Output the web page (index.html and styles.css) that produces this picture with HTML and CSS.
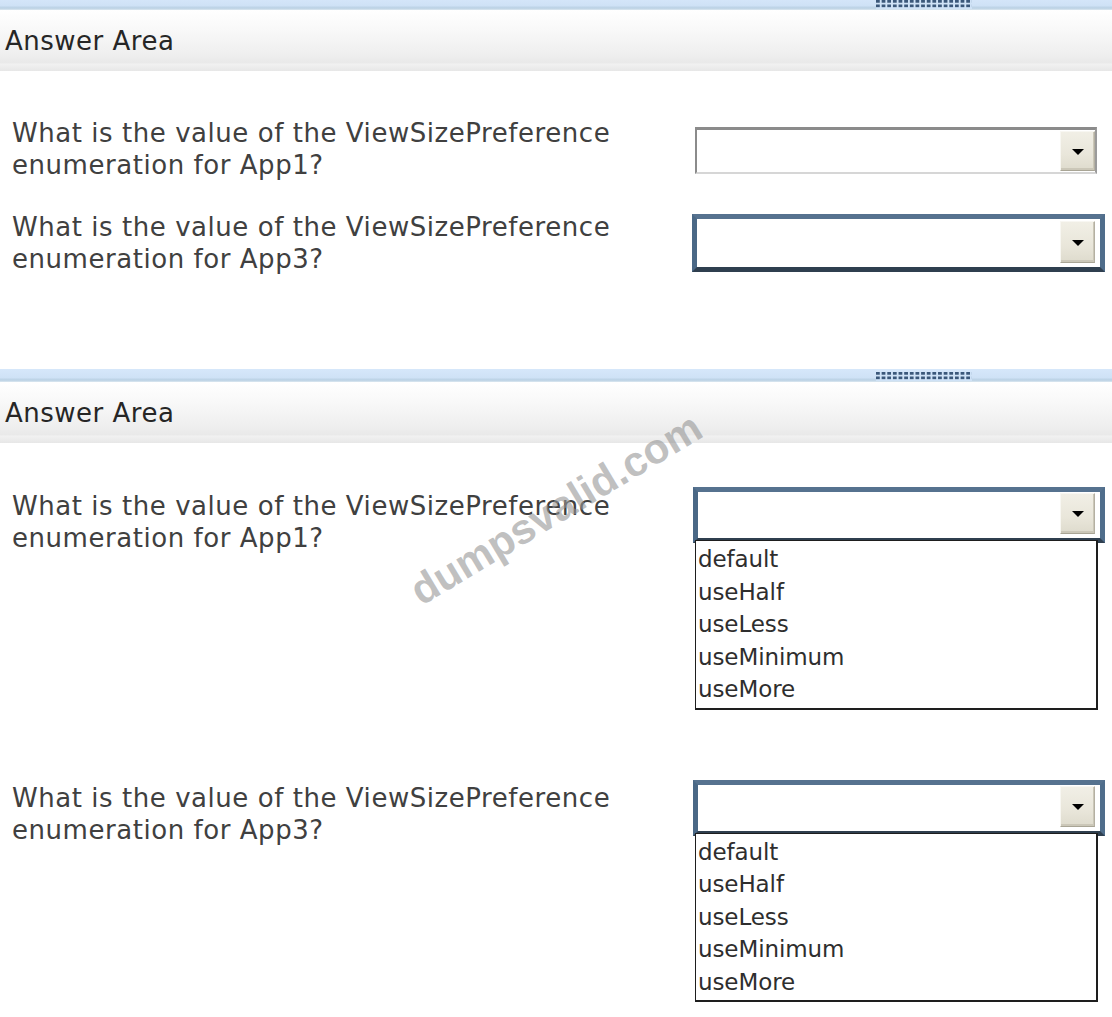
FILE: index.html
```html
<!DOCTYPE html>
<html lang="en">
<head>
<meta charset="utf-8">
<title>Answer Area</title>
<link rel="stylesheet" href="styles.css">
</head>
<body>
<div class="page">

  <section class="panel panel-first">
    <div class="topbar"><span class="grip"></span></div>
    <div class="head">Answer Area</div>
    <div class="body body-first">
      <div class="row">
        <p class="q">What is the value of the ViewSizePreference<br>enumeration for App1?</p>
        <div class="ctl ctl-a">
          <div class="select">
            <span class="btn"><svg width="12" height="6" viewBox="0 0 12 6"><path d="M0 0H12L6 6Z" fill="#000"/></svg></span>
          </div>
        </div>
      </div>
      <div class="row row-gap">
        <p class="q">What is the value of the ViewSizePreference<br>enumeration for App3?</p>
        <div class="ctl ctl-b">
          <div class="select select-focus select-wide">
            <span class="btn"><svg width="12" height="6" viewBox="0 0 12 6"><path d="M0 0H12L6 6Z" fill="#000"/></svg></span>
          </div>
        </div>
      </div>
    </div>
  </section>

  <section class="panel">
    <div class="topbar"><span class="grip"></span></div>
    <div class="head">Answer Area</div>
    <div class="body body-second">
      <div class="row">
        <p class="q">What is the value of the ViewSizePreference<br>enumeration for App1?</p>
        <div class="ctl ctl-c">
          <div class="select select-focus">
            <span class="btn"><svg width="12" height="6" viewBox="0 0 12 6"><path d="M0 0H12L6 6Z" fill="#000"/></svg></span>
          </div>
          <ul class="list">
            <li>default</li>
            <li>useHalf</li>
            <li>useLess</li>
            <li>useMinimum</li>
            <li>useMore</li>
          </ul>
        </div>
      </div>
      <div class="row row-gap-wide">
        <p class="q">What is the value of the ViewSizePreference<br>enumeration for App3?</p>
        <div class="ctl ctl-d">
          <div class="select select-focus">
            <span class="btn"><svg width="12" height="6" viewBox="0 0 12 6"><path d="M0 0H12L6 6Z" fill="#000"/></svg></span>
          </div>
          <ul class="list">
            <li>default</li>
            <li>useHalf</li>
            <li>useLess</li>
            <li>useMinimum</li>
            <li>useMore</li>
          </ul>
        </div>
      </div>
    </div>
  </section>

  <div class="watermark">dumpsvalid.com</div>
</div>
</body>
</html>
```

FILE: styles.css
```css
html, body {
  margin: 0;
  padding: 0;
  background: #fff;
}

body {
  font-family: "DejaVu Sans", Verdana, sans-serif;
  overflow: hidden;
}

.page {
  position: relative;
  width: 1112px;
  height: 1017px;
  overflow: hidden;
}

/* ---------- panel chrome ---------- */
.panel-first {
  margin-top: -3px;
}

.topbar {
  height: 13px;
  display: flex;
  justify-content: flex-end;
  padding-right: 140px;
  background: linear-gradient(to bottom, #d6e7fa 0%, #cfe2f6 65%, #b9d0e3 85%, #dce8f1 100%);
}

.grip {
  width: 96px;
  height: 9px;
  margin-top: 3px;
  background-color: #cfe2f6;
  background-image:
    linear-gradient(90deg, transparent 4px, #cfe2f6 4px),
    linear-gradient(to bottom, #3b587a 3px, transparent 3px);
  background-size: 5.65px 4.5px;
}

.head {
  height: 61px;
  display: flex;
  align-items: center;
  padding-left: 5px;
  font-size: 26px;
  line-height: 32px;
  letter-spacing: 0.5px;
  color: #262626;
  background: linear-gradient(to bottom, #ffffff 0%, #f8f8f8 35%, #eeeeee 75%, #e9e9e9 86%, #f1f1f1 89%, #e7e7e7 100%);
}

/* ---------- question rows ---------- */
.body {
  padding-left: 12px;
}

.body-first {
  padding-top: 46px;
  padding-bottom: 94px;
}

.body-second {
  padding-top: 47px;
}

.row {
  display: grid;
  grid-template-columns: 683px 412px;
  align-items: start;
}

.row-gap {
  margin-top: 30px;
}

.row-gap-wide {
  margin-top: 72px;
}

.q {
  margin: 0;
  font-size: 26px;
  line-height: 32px;
  letter-spacing: 0.55px;
  color: #404040;
}

.ctl {
  display: flex;
  flex-direction: column;
}

.ctl-a { margin-top: 10px; }
.ctl-b { margin-top: 3px; margin-left: -3px; }
.ctl-c { margin-top: -3px; margin-left: -2px; }
.ctl-d { margin-top: -2px; margin-left: -2px; }

/* ---------- drop-down box ---------- */
.select {
  box-sizing: border-box;
  width: 402px;
  height: 47px;
  display: flex;
  justify-content: flex-end;
  padding: 1px 0 1px 0;
  background: #fff;
  border-style: solid;
  border-width: 3px 2px 2px 2px;
  border-color: #8b8b8b #9b9b9b #d6d6d6 #8b8b8b;
}

.select-focus {
  width: 412px;
  height: 56px;
  padding: 1px 5px 4px 0;
  border-width: 5px;
  border-color: #56728f #4f6d8b #2f3f4f #4a6886;
}

.select-wide {
  width: 413px;
  height: 58px;
  padding-top: 2px;
}

.btn {
  width: 35px;
  display: flex;
  align-items: center;
  justify-content: center;
  box-sizing: border-box;
  background: linear-gradient(to bottom, #f1efe6 0%, #e9e6da 60%, #dedbcd 100%);
  border: 1px solid;
  border-color: #f8f7f2 #b4b0a2 #a9a595 #f8f7f2;
  box-shadow: inset -1px -2px 0 #cbc7b8;
}

.btn svg {
  display: block;
  margin-top: 1px;
}

/* ---------- open option list ---------- */
.list {
  list-style: none;
  margin: -3px 0 0 2px;
  padding: 2px 0 2px 2px;
  width: 403px;
  box-sizing: border-box;
  background: #fff;
  border: 1px solid #1e1e1e;
  border-bottom-width: 2px;
  border-right-width: 2px;
}

.list li {
  font-size: 23px;
  line-height: 32.5px;
  height: 32.5px;
  color: #2e2e2e;
  letter-spacing: -0.1px;
}

/* ---------- watermark ---------- */
.watermark {
  position: absolute;
  left: 390px;
  top: 485px;
  width: 332px;
  text-align: center;
  font-family: "Liberation Sans", Arial, sans-serif;
  font-weight: bold;
  font-size: 42px;
  line-height: 48px;
  color: rgba(150, 150, 150, 0.6);
  transform: rotate(-31deg);
  transform-origin: 50% 50%;
  pointer-events: none;
}
```
